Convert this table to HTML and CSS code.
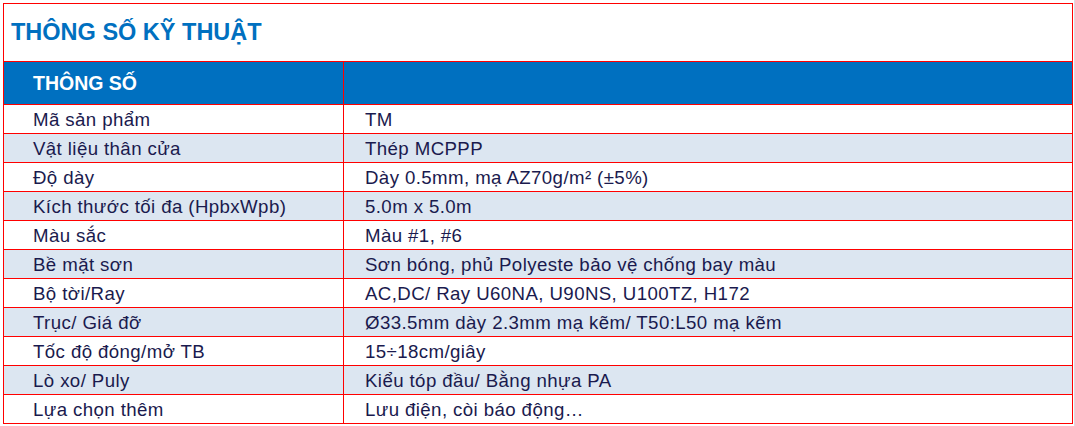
FILE: index.html
```html
<!DOCTYPE html>
<html lang="vi">
<head>
<meta charset="utf-8">
<title>Thông số kỹ thuật</title>
<link rel="stylesheet" href="styles.css">
</head>
<body>
<div class="sheet">
  <div class="spec">
    <div class="cell title">THÔNG SỐ KỸ THUẬT</div>
    <div class="cell head">THÔNG SỐ</div>
    <div class="cell head"></div>

    <div class="cell k">Mã sản phẩm</div><div class="cell v">TM</div>
    <div class="cell k alt">Vật liệu thân cửa</div><div class="cell v alt">Thép MCPPP</div>
    <div class="cell k">Độ dày</div><div class="cell v">Dày 0.5mm, mạ AZ70g/m² (±5%)</div>
    <div class="cell k alt">Kích thước tối đa (HpbxWpb)</div><div class="cell v alt">5.0m x 5.0m</div>
    <div class="cell k">Màu sắc</div><div class="cell v">Màu #1, #6</div>
    <div class="cell k alt">Bề mặt sơn</div><div class="cell v alt">Sơn bóng, phủ Polyeste bảo vệ chống bay màu</div>
    <div class="cell k">Bộ tời/Ray</div><div class="cell v">AC,DC/ Ray U60NA, U90NS, U100TZ, H172</div>
    <div class="cell k alt">Trục/ Giá đỡ</div><div class="cell v alt">Ø33.5mm dày 2.3mm mạ kẽm/ T50:L50 mạ kẽm</div>
    <div class="cell k">Tốc độ đóng/mở TB</div><div class="cell v">15÷18cm/giây</div>
    <div class="cell k alt">Lò xo/ Puly</div><div class="cell v alt">Kiểu tóp đầu/ Bằng nhựa PA</div>
    <div class="cell k">Lựa chọn thêm</div><div class="cell v">Lưu điện, còi báo động…</div>
  </div>
</div>
</body>
</html>
```

FILE: styles.css
```css
html, body {
  margin: 0;
  padding: 0;
  background: #ffffff;
}
.sheet {
  padding: 3px 1px 0 3px;
  width: 1070px;
  border-right: 1px solid #dadce0;
  height: 426px;
  box-sizing: content-box;
}
.spec {
  display: grid;
  grid-template-columns: 340px 729px;
  grid-template-rows: 58px 43px repeat(11, 29px);
  border-top: 1px solid #ff0000;
  border-left: 1px solid #ff0000;
  width: 1069px;
  font-family: "Liberation Sans", Arial, sans-serif;
  color: #1a1a4e;
}
.cell {
  border-right: 1px solid #ff0000;
  border-bottom: 1px solid #ff0000;
  white-space: nowrap;
  overflow: hidden;
}
.title {
  grid-column: 1 / 3;
  color: #0070c0;
  font-weight: bold;
  font-size: 23.5px;
  line-height: 57px;
  padding-left: 7px;
}
.head {
  background: #0070c0;
  color: #ffffff;
  font-weight: bold;
  font-size: 19.5px;
  line-height: 42px;
  padding-left: 29px;
}
.k, .v {
  font-size: 18.67px;
  letter-spacing: 0.4px;
  line-height: 26px;
  padding-top: 2px;
}
.k { padding-left: 29px; }
.v { padding-left: 21px; }
.alt { background: #dce6f1; }
```
